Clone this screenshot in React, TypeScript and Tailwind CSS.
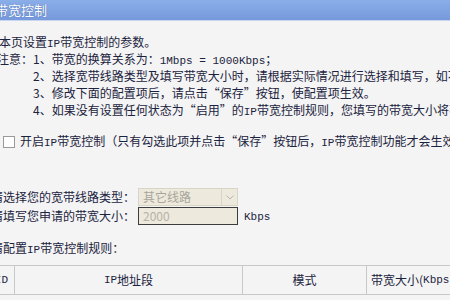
function M({ children }: { children: React.ReactNode }) {
  // 宋体风格的西文：等宽
  return (
    <span className="text-[11px]" style={{ fontFamily: '"Liberation Mono", monospace' }}>
      {children}
    </span>
  )
}

export default function App() {
  return (
    <div
      lang="zh-CN"
      className="w-[450px] h-[300px] overflow-hidden bg-[#f4f4f4] text-[12px] leading-[12px] text-[#1b2340]"
      style={{ fontFamily: '"Noto Sans CJK SC", "Liberation Sans", sans-serif' }}
    >
      {/* 标题栏 */}
      <div className="h-[21px] bg-gradient-to-b from-[#8aaee8] to-[#7699dc] border-b border-[#c7d5ef] flex items-center">
        <span className="ml-[-5px] text-[13px] text-white whitespace-nowrap [text-shadow:0_0_1px_#3a5aa0]">带宽控制</span>
      </div>

      {/* 说明 */}
      <div className="mt-[15px] flex flex-col gap-[5px] whitespace-nowrap">
        <div className="h-[12px] ml-[-1px]">本页设置<M>IP</M>带宽控制的参数。</div>
        <div className="h-[12px] ml-[-3px] flex">
          <span className="w-[36px]">注意：</span>
          <span>1、带宽的换算关系为：<M>1Mbps = 1000Kbps</M>；</span>
        </div>
        <div className="h-[12px] ml-[33px]">2、选择宽带线路类型及填写带宽大小时，请根据实际情况进行选择和填写，如不清楚，请咨询您的带宽提供商。</div>
        <div className="h-[12px] ml-[33px]">3、修改下面的配置项后，请点击“保存”按钮，使配置项生效。</div>
        <div className="h-[12px] ml-[33px]">4、如果没有设置任何状态为“启用”的<M>IP</M>带宽控制规则，您填写的带宽大小将不起作用。</div>
      </div>

      {/* 开启 */}
      <div className="mt-[19px] flex items-center whitespace-nowrap">
        <span className="ml-[3px] w-[12px] h-[12px] border border-[#9a9a9a] bg-white shrink-0" />
        <span className="ml-[5px]">开启<M>IP</M>带宽控制（只有勾选此项并点击“保存”按钮后，<M>IP</M>带宽控制功能才会生效）</span>
      </div>

      {/* 线路类型 / 带宽 */}
      <div className="mt-[39px] flex flex-col gap-[1px] whitespace-nowrap">
        <div className="flex items-center h-[18px]">
          <span className="ml-[-9px] w-[147px]">请选择您的宽带线路类型：</span>
          <div className="w-[100px] h-[18px] bg-[#ede9dc] border border-[#d8d4c6] flex items-center">
            <span className="flex-1 pl-[4px] text-[#a8a59a]">其它线路</span>
            <span className="w-[16px] h-[16px] border-l border-[#d8d4c6] flex items-center justify-center">
              <svg width="8" height="5" viewBox="0 0 8 5">
                <path d="M0.5 0.5 L4 4 L7.5 0.5" fill="none" stroke="#b8b6ae" strokeWidth="1" />
              </svg>
            </span>
          </div>
        </div>
        <div className="flex items-center h-[18px]">
          <span className="ml-[-9px] w-[147px]">请填写您申请的带宽大小：</span>
          <div className="w-[100px] h-[18px] bg-[#ede9dc] border border-[#3c3c3c] flex items-center">
            <span className="pl-[4px] text-[#b6b3a8]">2000</span>
          </div>
          <span className="ml-[6px]"><M>Kbps</M></span>
        </div>
      </div>

      <div className="mt-[17px] ml-[-9px] whitespace-nowrap">请配置<M>IP</M>带宽控制规则：</div>

      {/* 规则表 */}
      <div className="mt-[9px] h-[30px] border-y border-[#c8c8c8] grid grid-cols-[15px_228px_124px_1fr] whitespace-nowrap">
        <div className="flex items-center justify-end pr-[6px] border-r border-[#c8c8c8]"><M>ID</M></div>
        <div className="flex items-center justify-center border-r border-[#c8c8c8]"><M>IP</M>地址段</div>
        <div className="flex items-center justify-center border-r border-[#c8c8c8]">模式</div>
        <div className="flex items-center pl-[4px]">带宽大小(<M>Kbps</M>)</div>
      </div>
    </div>
  )
}
